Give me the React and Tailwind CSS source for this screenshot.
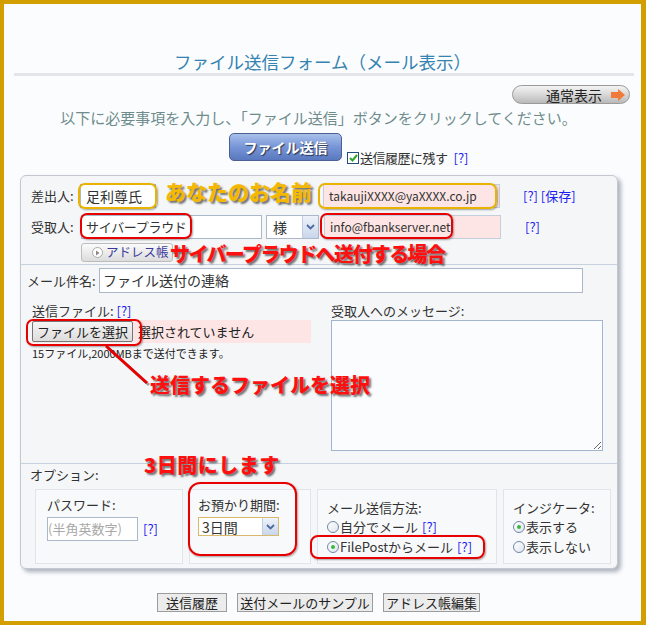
import React from "react";

const F = { fontFamily: '"Noto Sans CJK JP", "Noto Sans", sans-serif' };

function Radio({ checked }) {
  return (
    <span className="inline-flex items-center justify-center w-[12px] h-[12px] rounded-full border border-[#6f87a6] bg-gradient-to-br from-white to-[#dfe6ee] shrink-0">
      {checked && <span className="w-[4px] h-[4px] rounded-full bg-[#3db83d]" />}
    </span>
  );
}

function Q() {
  return <span className="text-[#1c1cf0]">[?]</span>;
}

function Arrow() {
  return (
    <span className="inline-flex items-center justify-center w-[16px] h-full bg-gradient-to-b from-[#eef3fb] to-[#c9d6ea] border-l border-[#c0cde0]">
      <svg width="9" height="6" viewBox="0 0 9 6">
        <path d="M1 1 L4.5 4.5 L8 1" stroke="#4a6aa0" strokeWidth="1.8" fill="none" />
      </svg>
    </span>
  );
}

export default function App() {
  return (
    <div style={F} className="w-[646px] h-[625px] bg-[#fbfcfe] border-l-4 border-t-4 border-b-4 border-r-[5px] border-[#d29e00] text-[#333] overflow-hidden">
      {/* title */}
      <div className="pt-[47px] h-[69px] text-center text-[17.5px] leading-[22px] text-[#3583b0]">
        ファイル送信フォーム（メール表示）
      </div>
      <div className="ml-[10px] mr-[7px] h-[3px] bg-[#e3e5ea]" />

      {/* normal view button */}
      <div className="flex justify-end pr-[11px] mt-[9px]">
        <div className="relative w-[118px] h-[19px] rounded-full border border-[#9a9a9a] bg-gradient-to-b from-[#f4f4f4] via-[#d8d8d8] to-[#b9b9b9] flex items-center">
          <span className="ml-[33px] text-[14px] leading-none text-[#222]">通常表示</span>
          <svg className="absolute right-[3px] top-[2px]" width="16" height="14" viewBox="0 0 16 14">
            <path d="M1 4 H8 V1 L15 7 L8 13 V10 H1 Z" fill="#f07a3a" />
          </svg>
        </div>
      </div>

      <div className="mt-[4px] h-[20px] text-center text-[15px] leading-[20px] text-[#6e8c8c] pr-[8px]">
        以下に必要事項を入力し、「ファイル送信」ボタンをクリックしてください。
      </div>

      {/* send button row */}
      <div className="mt-[5px] flex items-end pl-[225px] h-[31px]">
        <div className="w-[113px] h-[28px] mb-[3px] rounded-[5px] border border-[#4b5f92] bg-gradient-to-b from-[#a9c0ea] via-[#7795d6] to-[#5a78be] flex items-center justify-center text-white font-bold text-[14px] [text-shadow:1px_1px_1px_#223355]">
          ファイル送信
        </div>
        <div className="ml-[5px] flex items-center text-[13px] leading-none">
          <span className="w-[12px] h-[12px] border border-[#1f4f7f] bg-white flex items-center justify-center">
            <svg width="9" height="8" viewBox="0 0 9 8">
              <path d="M1 4 L3.5 6.5 L8 1" stroke="#2fa42f" strokeWidth="2" fill="none" />
            </svg>
          </span>
          <span className="ml-[1px] tracking-[-0.5px]">送信履歴に残す</span>
          <span className="ml-[6px]"><Q /></span>
        </div>
      </div>

      {/* main panel */}
      <div className="relative mt-[11px] ml-[16px] w-[598px] h-[394px] rounded-[6px] border border-[#c3c7cf] bg-[#f5f6f8] shadow-[3px_3px_4px_rgba(120,130,145,0.6)] text-[13px]">
        {/* address section */}
        <div className="pt-[8px] pl-[10px] h-[89px] border-b border-[#c8d2df]">
          <div className="flex items-center h-[24px]">
            <span className="w-[49px]">差出人:</span>
            <div className="w-[76px] h-[24px] border border-[#aab8ca] bg-white pl-[5px] leading-[22px] text-[14px]">足利尊氏</div>
            <div className="w-[167px]" />
            <div className="w-[177px] h-[24px] border border-[#c4cfdc] bg-[#fde5e5] pl-[5px] leading-[22px] text-[12px]">takaujiXXXX@yaXXXX.co.jp</div>
            <span className="ml-[23px] text-[#1c1cf0]">[?] [保存]</span>
          </div>
          <div className="flex items-center h-[24px] mt-[7px]">
            <span className="w-[50px]">受取人:</span>
            <div className="w-[181px] h-[24px] border border-[#aab8ca] bg-white pl-[4px] leading-[22px] text-[13px] tracking-[-0.3px]">サイバープラウド</div>
            <div className="ml-[4px] w-[53px] h-[24px] border border-[#aab8ca] bg-white flex items-center justify-between">
              <span className="pl-[6px] text-[14px]">様</span>
              <Arrow />
            </div>
            <div className="ml-[5px] w-[177px] h-[24px] border border-[#c4cfdc] bg-[#fde5e5] pl-[5px] leading-[22px] text-[12px]">info@fbankserver.net</div>
            <span className="ml-[24px]"><Q /></span>
          </div>
          <div className="ml-[50px] mt-[4px] w-[92px] h-[19px] rounded-[3px] border border-[#bcbcbc] bg-gradient-to-b from-[#fbfbfb] to-[#dcdcdc] flex items-center">
            <span className="ml-[10px] w-[11px] h-[11px] rounded-full border border-[#aaa] bg-white flex items-center justify-center">
              <svg width="5" height="6" viewBox="0 0 5 6"><path d="M1 0.5 L4.5 3 L1 5.5 Z" fill="#888" /></svg>
            </span>
            <span className="ml-[3px] text-[#3a3a9a] leading-none text-[12.5px]">アドレス帳</span>
          </div>
        </div>

        {/* subject / files section */}
        <div className="h-[199px] border-b border-[#c8d2df] pt-[3px]">
          <div className="flex items-center pl-[6px]">
            <span className="w-[72px]">メール件名:</span>
            <div className="w-[484px] h-[25px] border border-[#aab8ca] bg-white pl-[3px] leading-[23px] text-[14px]">ファイル送付の連絡</div>
          </div>
          <div className="flex mt-[8px]">
            <div className="pl-[11px] w-[310px]">
              <div className="h-[19px] leading-[19px]">送信ファイル: <Q /></div>
              <div className="w-[279px] h-[23px] bg-[#fde5e5] flex items-center">
                <div className="h-[21px] w-[101px] rounded-[2px] border border-[#767676] bg-gradient-to-b from-[#f5f5f5] to-[#dddddd] flex items-center justify-center text-[13px] text-[#222]">ファイルを選択</div>
                <span className="ml-[5px] text-[13px] text-[#222]">選択されていません</span>
              </div>
              <div className="mt-[3px] text-[11px] leading-[14px] text-[#222]">15ファイル,2000MBまで送付できます。</div>
            </div>
            <div>
              <div className="h-[19px] leading-[19px]">受取人へのメッセージ:</div>
              <textarea className="block w-[272px] h-[131px] border border-[#a3b5cc] bg-[#fbfcfe] outline-none" />
            </div>
          </div>
        </div>

        {/* options */}
        <div className="pl-[9px] pt-[3px]">
          <div className="h-[16px] leading-[16px]">オプション:</div>
          <div className="flex gap-[6px] ml-[5px] mt-[6px] h-[75px]">
            <div className="w-[148px] border border-[#e1e4e9] bg-[#f8f9fa] pl-[11px] pt-[6px]">
              <div className="leading-[17px]">パスワード:</div>
              <div className="flex items-center mt-[4px]">
                <div className="w-[91px] h-[24px] border border-[#aab8ca] bg-white text-[#a8a8a8] text-[13px] leading-[22px]">(半角英数字)</div>
                <span className="ml-[5px]"><Q /></span>
              </div>
            </div>
            <div className="w-[122px] border border-[#e1e4e9] bg-[#f8f9fa] pl-[8px] pt-[6px]">
              <div className="leading-[17px]">お預かり期間:</div>
              <div className="mt-[4px] w-[81px] h-[19px] border border-[#d9b96a] bg-white flex items-center justify-between">
                <span className="pl-[3px] text-[14px] leading-none">3日間</span>
                <Arrow />
              </div>
            </div>
            <div className="w-[180px] border border-[#e1e4e9] bg-[#f8f9fa] pl-[9px] pt-[9px]">
              <div className="leading-[17px]">メール送信方法:</div>
              <div className="flex items-center h-[20px] mt-[1px]"><Radio /><span className="ml-[1px]">自分でメール</span><span className="ml-[4px]"><Q /></span></div>
              <div className="flex items-center h-[20px]"><Radio checked /><span className="ml-[1px]">FilePostからメール</span><span className="ml-[4px]"><Q /></span></div>
            </div>
            <div className="w-[108px] border border-[#e1e4e9] bg-[#f8f9fa] pl-[9px] pt-[9px]">
              <div className="leading-[17px]">インジケータ:</div>
              <div className="flex items-center h-[20px] mt-[1px]"><Radio checked /><span className="ml-[1px]">表示する</span></div>
              <div className="flex items-center h-[20px]"><Radio /><span className="ml-[1px]">表示しない</span></div>
            </div>
          </div>
        </div>

        {/* annotations */}
        <div className="absolute left-[57px] top-[7px] w-[79px] h-[26px] rounded-[7px] border-2 border-[#e9b300] shadow-[1px_1px_2px_rgba(0,0,0,0.35)]" />
        <div className="absolute left-[297px] top-[7px] w-[179px] h-[26px] rounded-[7px] border-2 border-[#e9b300] shadow-[1px_1px_2px_rgba(0,0,0,0.35)]" />
        <div className="absolute left-[144px] top-[1px] text-[21px] leading-[28px] font-black text-[#f4b800] [text-shadow:2px_2px_2px_rgba(0,0,0,0.55)] whitespace-nowrap">あなたのお名前</div>
        <div className="absolute left-[59px] top-[37px] w-[112px] h-[26px] rounded-[7px] border-2 border-[#e80000] shadow-[1px_1px_2px_rgba(0,0,0,0.35)]" />
        <div className="absolute left-[299px] top-[37px] w-[133px] h-[26px] rounded-[7px] border-2 border-[#e80000] shadow-[1px_1px_2px_rgba(0,0,0,0.35)]" />
        <div className="absolute left-[149px] top-[64px] text-[20px] leading-[28px] font-black tracking-[-1.6px] text-[#ff1010] [text-shadow:2px_2px_2px_rgba(0,0,0,0.55)] whitespace-nowrap">サイバープラウドへ送付する場合</div>
        <div className="absolute left-[5px] top-[143px] w-[116px] h-[27px] rounded-[7px] border-2 border-[#e80000] shadow-[1px_1px_2px_rgba(0,0,0,0.35)]" />
        <svg className="absolute left-[80px] top-[166px]" width="50" height="45" viewBox="0 0 50 45">
          <path d="M5 4 L46 41" stroke="rgba(0,0,0,0.35)" strokeWidth="3" transform="translate(2,2)" />
          <path d="M5 4 L46 41" stroke="#e80000" strokeWidth="3" />
        </svg>
        <div className="absolute left-[129px] top-[195px] text-[20px] leading-[28px] font-black text-[#ff1010] [text-shadow:2px_2px_2px_rgba(0,0,0,0.55)] whitespace-nowrap">送信するファイルを選択</div>
        <div className="absolute left-[123px] top-[275px] text-[20px] leading-[28px] font-black tracking-[0.5px] text-[#ff1010] [text-shadow:2px_2px_2px_rgba(0,0,0,0.55)] whitespace-nowrap">3日間にします</div>
        <div className="absolute left-[167px] top-[306px] w-[109px] h-[74px] rounded-[12px] border-2 border-[#e80000] shadow-[1px_1px_2px_rgba(0,0,0,0.35)]" />
        <div className="absolute left-[289px] top-[359px] w-[175px] h-[24px] rounded-[8px] border-2 border-[#e80000] shadow-[1px_1px_2px_rgba(0,0,0,0.35)]" />
      </div>

      {/* bottom buttons */}
      <div className="mt-[24px] flex pl-[153px] gap-[10px] text-[13px] text-[#222]">
        <div className="w-[70px] h-[19px] border border-[#9c9c9c] bg-[#ececec] flex items-center justify-center">送信履歴</div>
        <div className="w-[136px] h-[19px] border border-[#9c9c9c] bg-[#ececec] flex items-center justify-center">送付メールのサンプル</div>
        <div className="w-[97px] h-[19px] border border-[#9c9c9c] bg-[#ececec] flex items-center justify-center">アドレス帳編集</div>
      </div>
    </div>
  );
}
